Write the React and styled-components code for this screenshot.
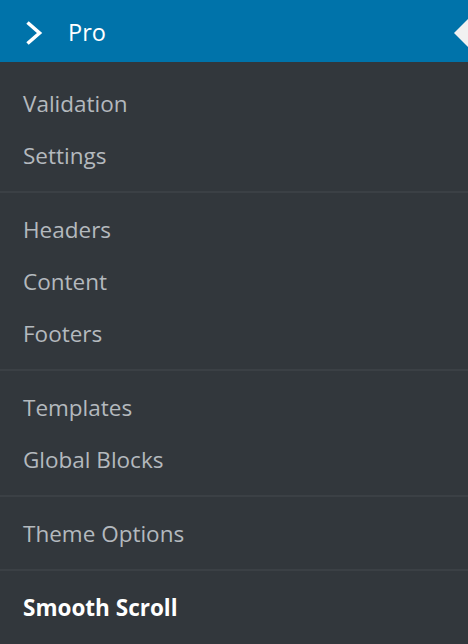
import React from 'react';
import styled, { createGlobalStyle } from 'styled-components';

const GlobalStyle = createGlobalStyle`
  html, body {
    margin: 0;
    padding: 0;
    background: #32373c;
  }
  body {
    font-family: "Open Sans", "Noto Sans", sans-serif;
  }
`;

const groups = [
  ['Validation', 'Settings'],
  ['Headers', 'Content', 'Footers'],
  ['Templates', 'Global Blocks'],
  ['Theme Options'],
];

const Menu = styled.nav`
  width: 468px;
  height: 644px;
  background: #32373c;
  overflow: hidden;
`;

const Header = styled.div`
  position: relative;
  height: 62px;
  background: #0073aa;
  display: flex;
  align-items: center;
  padding-left: 25px;
  color: #fff;
`;

const Chevron = styled.svg`
  width: 18px;
  height: 24px;
  margin-right: 25px;
  margin-top: 4px;
`;

const HeaderLabel = styled.span`
  font-size: 23.5px;
  line-height: 1;
  margin-top: 3px;
`;

const Pointer = styled.span`
  position: absolute;
  right: 0;
  top: 19px;
  width: 0;
  height: 0;
  border-style: solid;
  border-width: 14px 14px 14px 0;
  border-color: transparent #f1f1f1 transparent transparent;
`;

const Group = styled.ul`
  list-style: none;
  margin: 0;
  padding: ${(p) => (p.$first ? '15px 0 10px' : '10px 0 10px')};
  border-top: ${(p) => (p.$first ? 'none' : '2px solid #3b4045')};
`;

const Item = styled.li`
  height: 52px;
  display: flex;
  align-items: center;
  padding-left: 23px;
  font-size: 22.5px;
  color: ${(p) => (p.$current ? '#ffffff' : '#b4b9be')};
  font-weight: ${(p) => (p.$current ? 700 : 400)};
`;

export default function App() {
  return (
    <>
      <GlobalStyle />
      <Menu>
        <Header>
          <Chevron viewBox="0 0 18 24">
            <path d="M2.5 1.5 L14.5 12 L2.5 22.5" fill="none" stroke="#fff" strokeWidth="3.6" />
          </Chevron>
          <HeaderLabel>Pro</HeaderLabel>
          <Pointer />
        </Header>
        {groups.map((items, i) => (
          <Group key={i} $first={i === 0}>
            {items.map((label) => (
              <Item key={label}>{label}</Item>
            ))}
          </Group>
        ))}
        <Group>
          <Item $current>Smooth Scroll</Item>
        </Group>
      </Menu>
    </>
  );
}
